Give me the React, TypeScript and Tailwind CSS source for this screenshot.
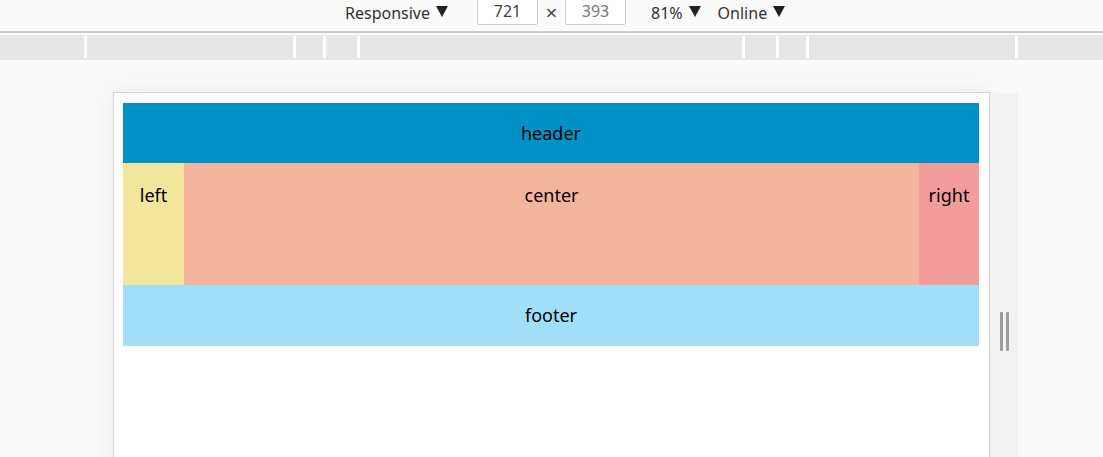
import React from "react";

const segs = [84, 206, 27, 31, 382, 31, 27, 206, 85];

function Tri() {
  return (
    <svg width="12" height="11" viewBox="0 0 12 11" className="ml-[6px] mb-[3px]">
      <polygon points="0,0 12,0 6,11" fill="#222" />
    </svg>
  );
}

export default function App() {
  return (
    <div
      className="w-[1103px] h-[457px] overflow-hidden bg-[#fafafa] flex flex-col"
      style={{ fontFamily: '"Noto Sans", "Open Sans", sans-serif' }}
    >
      {/* toolbar */}
      <div className="shrink-0 h-[31px] flex items-start pl-[345px] text-[16px] text-[#333]">
        <div className="flex items-center h-[26px]">
          <span>Responsive</span>
          <Tri />
        </div>
        <div className="ml-[29px] mt-[-2px] w-[61px] h-[27px] border border-[#cfcfcf] bg-white rounded-b-[2px] flex items-end justify-center pb-[1px] text-[#444]">
          721
        </div>
        <div className="w-[27px] h-[26px] flex items-end justify-center text-[20px] leading-[26px] text-[#444]">×</div>
        <div className="mt-[-2px] w-[61px] h-[27px] border border-[#cfcfcf] bg-white rounded-b-[2px] flex items-end justify-center pb-[1px] text-[#777]">
          393
        </div>
        <div className="ml-[25px] flex items-center h-[26px]">
          <span>81%</span>
          <Tri />
        </div>
        <div className="ml-[17px] flex items-center h-[26px]">
          <span>Online</span>
          <Tri />
        </div>
      </div>
      <div className="shrink-0 h-[2px] bg-[#cccccc]" />
      {/* ruler band */}
      <div className="shrink-0 mt-[2px] h-[25px] bg-[#e6e6e6] flex items-start pt-[1px] gap-[3px]">
        {segs.map((w, i) => (
          <div key={i} className="h-[22px] bg-[#e6e6e6]" style={{ width: w }} />
        )).reduce<React.ReactNode[]>((acc, el, i) => {
          if (i > 0) acc.push(<div key={"s" + i} className="h-[22px] w-[3px] bg-white -mx-[3px]" />);
          acc.push(el);
          return acc;
        }, [])}
      </div>

      {/* page area */}
      <div className="shrink-0 flex items-start pl-[113px] pt-[32px]">
        <div className="w-[877px] h-[380px] bg-white border border-[#d6d6d6] shadow-[0_0_24px_rgba(0,0,0,0.07)] pt-[10px] pl-[9px]">
          <div className="w-[856px] text-[18px] text-black">
            <div className="h-[60px] bg-[#0091c7] flex items-center justify-center">header</div>
            <div className="flex h-[122px] leading-[64px]">
              <div className="w-[61px] bg-[#f4e59d] text-center">left</div>
              <div className="flex-1 bg-[#f3b59e] text-center">center</div>
              <div className="w-[60px] bg-[#f29d9b] text-center">right</div>
            </div>
            <div className="h-[61px] bg-[#a0dff7] flex items-center justify-center">footer</div>
          </div>
        </div>
        <div className="mt-[1px] w-[28px] h-[380px] bg-[#f2f2f2] flex justify-center gap-[3px] pt-[219px]">
          <div className="w-[3px] h-[39px] rounded-[1px] bg-[#9e9e9e]" />
          <div className="w-[3px] h-[39px] rounded-[1px] bg-[#9e9e9e]" />
        </div>
      </div>
    </div>
  );
}
